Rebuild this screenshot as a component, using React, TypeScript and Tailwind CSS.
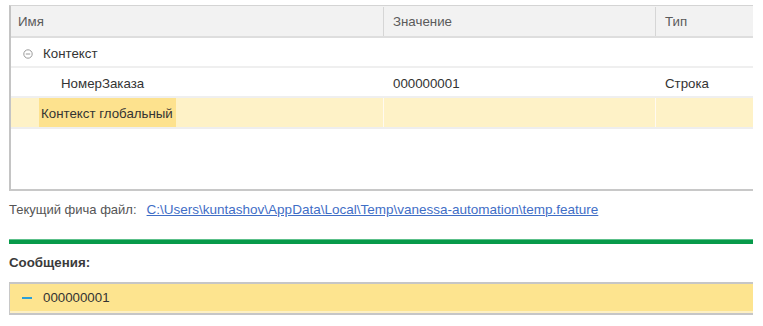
import React from "react";

const font = { fontFamily: '"Liberation Sans", Arial, sans-serif' };

export default function App() {
  return (
    <div className="w-[763px] h-[326px] bg-white overflow-hidden text-[13.3px] text-[#333333]" style={font}>
      <div className="pl-[9px] pr-[10px] pt-[5px]">
        {/* Table */}
        <div className="h-[186px] border-t border-t-[#d4d4d4] border-l-2 border-l-[#c4c4c4] border-b-2 border-b-[#c8c8c8] flex flex-col">
          <div className="flex h-[32px] pt-[1px] bg-[#f2f2f2] border-b-2 border-b-[#dedede] text-[#5a5a5a]">
            <div className="w-[373px] flex items-center pl-[7px] border-r border-r-[#d6d6d6]">Имя</div>
            <div className="w-[272px] flex items-center pl-[9px] border-r border-r-[#d6d6d6]">Значение</div>
            <div className="flex-1 flex items-center pl-[9px]">Тип</div>
          </div>
          <div className="flex h-[30px] border-b-2 border-b-[#efefef]">
            <div className="w-[373px] flex items-center pt-[3px] pl-[12px] border-r border-r-white">
              <svg width="10" height="10" viewBox="0 0 10 10" className="mr-[10px]">
                <circle cx="5" cy="5" r="4.2" fill="none" stroke="#9a9a9a" strokeWidth="1" />
                <line x1="2.8" y1="5" x2="7.2" y2="5" stroke="#9a9a9a" strokeWidth="1" />
              </svg>
              <span>Контекст</span>
            </div>
            <div className="w-[272px] border-r border-r-white" />
            <div className="flex-1" />
          </div>
          <div className="flex h-[30px] border-b-2 border-b-[#efefef]">
            <div className="w-[373px] flex items-center pt-[3px] pl-[50px] border-r border-r-white">НомерЗаказа</div>
            <div className="w-[272px] flex items-center pt-[3px] pl-[9px] border-r border-r-white">000000001</div>
            <div className="flex-1 flex items-center pt-[3px] pl-[9px]">Строка</div>
          </div>
          <div className="flex h-[31px] border-b-2 border-b-[#eeeeee] bg-[#fef2c7]">
            <div className="w-[373px] flex items-stretch pl-[28px] border-r border-r-[#fffaf0]">
              <div className="flex items-center pt-[3px] px-[2px] pr-[3px] bg-[#fde28e]">Контекст глобальный</div>
            </div>
            <div className="w-[272px] border-r border-r-[#fffaf0]" />
            <div className="flex-1" />
          </div>
        </div>

        {/* Current feature file */}
        <div className="flex items-center h-[20px] mt-[9px] text-[13px] text-[#555555]">
          <span>Текущий фича файл:</span>
          <span className="ml-[10px] text-[13.5px] text-[#3f6ec6] underline">C:\Users\kuntashov\AppData\Local\Temp\vanessa-automation\temp.feature</span>
        </div>

        {/* Green bar */}
        <div className="mt-[19px] h-[5px] bg-[#079a4a] border-t border-t-[#5cc08a]" />

        {/* Messages */}
        <div className="mt-[12px] h-[14px] flex items-center font-bold text-[#3a3a3a]">Сообщения:</div>
        <div className="mt-[12px] h-[33px] flex flex-col border-l border-l-[#c8c8c8] border-t-2 border-t-[#c6c6c6] border-b-2 border-b-[#c6c6c6]">
          <div className="flex-1 bg-[#fde48f] flex items-center pt-[1px] pl-[12px]">
            <div className="w-[10px] h-[2px] bg-[#2a9fd8] mr-[11px]" />
            <span>000000001</span>
          </div>
          <div className="h-[2px] bg-[#fdf0c4]" />
        </div>
      </div>
    </div>
  );
}
